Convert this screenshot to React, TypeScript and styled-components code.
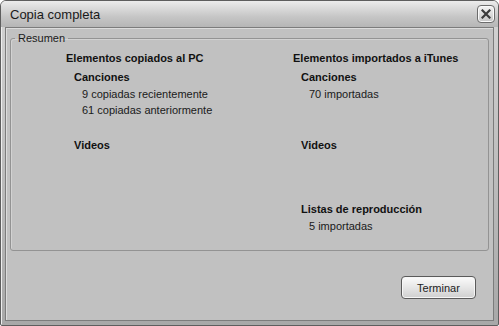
import React from "react";
import styled, { createGlobalStyle } from "styled-components";

// =======================
// global
// =======================
const GlobalStyle = createGlobalStyle`
  html, body {
    margin: 0;
    padding: 0;
    background: #ffffff;
  }
  body {
    font-family: "Liberation Sans", Arial, sans-serif;
    font-size: 11px;
    color: #111;
  }
`;

// =======================
// window frame
// =======================
const Window = styled.div`
  width: 499px;
  height: 326px;
  box-sizing: border-box;
  display: flex;
  flex-direction: column;
  background: linear-gradient(to bottom, #d4d4d4, #a8a8a8);
  border: 1px solid #5e5e5e;
  border-radius: 6px 6px 2px 2px;
  padding: 0 4px 4px 4px;
  box-shadow: inset 1px 1px 0 #eeeeee;
`;

const TitleBar = styled.div`
  height: 26px;
  display: flex;
  align-items: center;
  justify-content: space-between;
  margin: 0 -4px;
  padding-left: 9px;
  padding-right: 3px;
  background: linear-gradient(
    to bottom,
    #ececec 0%,
    #d6d6d6 35%,
    #c6c6c6 60%,
    #b6b6b6 100%
  );
  border-radius: 5px 5px 0 0;
`;

const Title = styled.span`
  font-size: 13px;
  color: #1a1a1a;
`;

const CloseButton = styled.button`
  width: 18px;
  height: 18px;
  padding: 0;
  display: flex;
  align-items: center;
  justify-content: center;
  border: 1px solid #6c6c6c;
  border-radius: 4px;
  background: linear-gradient(to bottom, #f4f4f4, #c4c4c4);
  box-shadow: inset 0 0 0 1px #fafafa;
  cursor: pointer;
`;

const Client = styled.div`
  flex: 1;
  display: flex;
  flex-direction: column;
  background: #c1c1c1;
  border: 1px solid #7c7c7c;
  box-shadow: inset 1px 1px 0 #dcdcdc;
  padding: 4px 4px 0 4px;
`;

// =======================
// group box
// =======================
const GroupBox = styled.fieldset`
  margin: 0;
  padding: 6px 0 0 0;
  height: 219px;
  box-sizing: border-box;
  border: 1px solid #939393;
  border-radius: 3px;
  box-shadow: inset 1px 1px 0 #d2d2d2;
`;

const Legend = styled.legend`
  padding: 0 3px;
  margin-left: 4px;
  font-size: 11px;
  color: #1a1a1a;
`;

const Columns = styled.div`
  display: grid;
  padding-left: 55px;
  grid-template-columns: 227px 1fr;
  grid-template-rows: 19px 68px 64px auto;
  grid-auto-flow: column;
`;

const Heading = styled.div`
  font-weight: bold;
  font-size: 11px;
  line-height: 16px;
  color: #111;
`;

const Section = styled.div`
  padding-left: 8px;
`;

const SectionTitle = styled.div`
  font-weight: bold;
  line-height: 16px;
  margin-bottom: 1px;
`;

const Item = styled.div`
  padding-left: 8px;
  line-height: 16px;
  color: #1a1a1a;
`;

// =======================
// footer
// =======================
const Footer = styled.div`
  flex: 1;
  display: flex;
  justify-content: flex-end;
  align-items: flex-start;
  padding: 25px 13px 0 0;
`;

const Button = styled.button`
  width: 75px;
  height: 23px;
  font-family: "Liberation Sans", Arial, sans-serif;
  font-size: 11px;
  color: #222;
  border: 1px solid #5a5a5a;
  border-radius: 4px;
  background: linear-gradient(to bottom, #fbfbfb 0%, #e6e6e6 50%, #cfcfcf 100%);
  box-shadow: inset 0 0 0 1px #f6f6f6;
  cursor: pointer;
`;

type Block = { title: string; items: string[] };

const copied: Block[] = [
  { title: "Canciones", items: ["9 copiadas recientemente", "61 copiadas anteriormente"] },
  { title: "Videos", items: [] },
];

const imported: Block[] = [
  { title: "Canciones", items: ["70 importadas"] },
  { title: "Videos", items: [] },
  { title: "Listas de reproducción", items: ["5 importadas"] },
];

const renderColumn = (heading: string, blocks: Block[]) => [
  <Heading key="h">{heading}</Heading>,
  ...blocks.map((b) => (
    <Section key={b.title}>
      <SectionTitle>{b.title}</SectionTitle>
      {b.items.map((i) => (
        <Item key={i}>{i}</Item>
      ))}
    </Section>
  )),
  ...(blocks.length < 3 ? [<div key="pad" />] : []),
];

const App: React.FC = () => {
  return (
    <>
      <GlobalStyle />
      <Window>
        <TitleBar>
          <Title>Copia completa</Title>
          <CloseButton aria-label="Cerrar">
            <svg width="10" height="10" viewBox="0 0 10 10">
              <path
                d="M1.5 1.5 L8.5 8.5 M8.5 1.5 L1.5 8.5"
                stroke="#3a3a3a"
                strokeWidth="2.2"
                strokeLinecap="square"
              />
            </svg>
          </CloseButton>
        </TitleBar>
        <Client>
          <GroupBox>
            <Legend>Resumen</Legend>
            <Columns>
              {renderColumn("Elementos copiados al PC", copied)}
              {renderColumn("Elementos importados a iTunes", imported)}
            </Columns>
          </GroupBox>
          <Footer>
            <Button>Terminar</Button>
          </Footer>
        </Client>
      </Window>
    </>
  );
};

export default App;
